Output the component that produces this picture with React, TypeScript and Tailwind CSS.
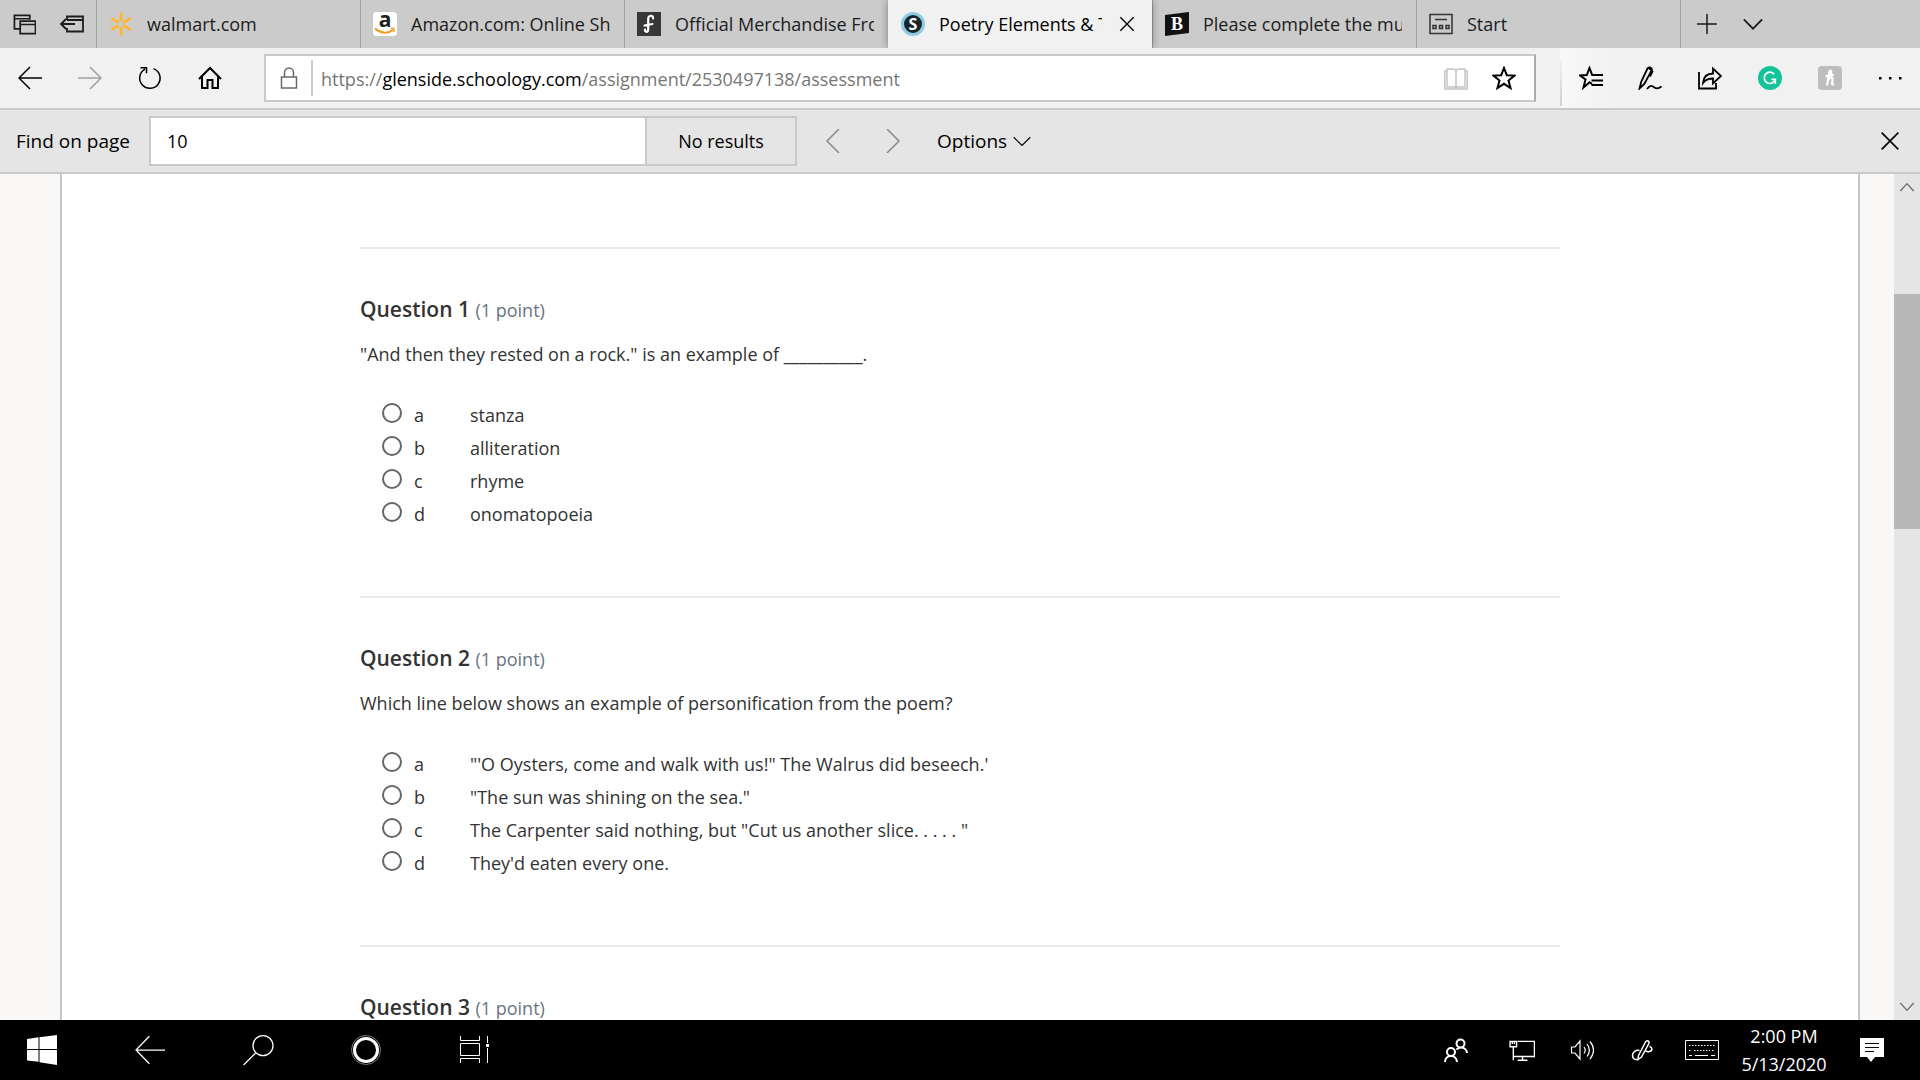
import { ReactNode } from 'react';

interface Tab {
    title: string;
    icon: ReactNode;
    active?: boolean;
}

interface Question {
    id: number;
    prompt: string;
    answers: string[];
}

const WalmartIcon = () => (
    <svg viewBox="0 0 24 24" className="size-6" stroke="#fcb830" strokeWidth="3" strokeLinecap="round">
        <path d="M12 2v6M12 16v6M3.4 7l5.2 3M15.4 14l5.2 3M3.4 17l5.2-3M15.4 10l5.2-3" />
    </svg>
);

const AmazonIcon = () => (
    <span className="relative flex size-6 justify-center rounded bg-white text-[21px] leading-[15px] font-bold text-[#221f1f]">
        a
        <svg viewBox="0 0 24 24" className="absolute inset-0" fill="none" stroke="#f49b1a" strokeWidth="2">
            <path d="M2 16.5c5.5 5 13 5.5 18 1.5" />
            <path d="M18 16.5c3-.6 4-.2 2.8 3.5" strokeWidth="1.4" />
        </svg>
    </span>
);

const MerchIcon = () => (
    <svg viewBox="0 0 24 24" className="size-6" fill="none" stroke="#fff" strokeWidth="2.2" strokeLinecap="round">
        <path d="M0 0h24v24H0z" fill="#373737" stroke="none" />
        <path d="M16 6.500c.5-4-4.800-3.500-4.800.5V17c0 4-3.700 3.500-3.200.5M7.500 13.500l8-1.500" />
    </svg>
);

const SchoologyIcon = () => (
    <span className="flex size-6 items-center justify-center rounded-full border-[3px] border-[#8ccbe0] bg-[#17242c] text-base leading-none font-bold text-white">S</span>
);

const BleacherIcon = () => (
    <span className="relative flex size-6 items-center justify-center font-['Liberation_Serif',serif] text-lg leading-none font-bold text-white">
        <svg viewBox="0 0 24 24" className="absolute inset-0" fill="#111">
            <path d="M0 3 24 0v21L0 24z" />
        </svg>
        <span className="relative">B</span>
    </span>
);

const StartIcon = () => (
    <svg viewBox="0 0 24 24" className="size-6" fill="none" stroke="#333" strokeWidth="1.5">
        <path d="M1 2.5h22v19H1zM6 7.500h12M4 13.500h3v3H4zM10.500 13.500h3v3h-3zM17 13.500h3v3h-3z" />
    </svg>
);

const tabs: Tab[] = [
    { title: 'walmart.com', icon: <WalmartIcon /> },
    { title: 'Amazon.com: Online Sho', icon: <AmazonIcon /> },
    { title: 'Official Merchandise Fro', icon: <MerchIcon /> },
    { title: 'Poetry Elements & T', icon: <SchoologyIcon />, active: true },
    { title: 'Please complete the mul', icon: <BleacherIcon /> },
    { title: 'Start', icon: <StartIcon /> },
];

const questions: Question[] = [
    {
        id: 1,
        prompt: '"And then they rested on a rock." is an example of __________.',
        answers: ['stanza', 'alliteration', 'rhyme', 'onomatopoeia'],
    },
    {
        id: 2,
        prompt: 'Which line below shows an example of personification from the poem?',
        answers: [
            '"\'O Oysters, come and walk with us!" The Walrus did beseech.\'',
            '"The sun was shining on the sea."',
            'The Carpenter said nothing, but "Cut us another slice. . . . . "',
            "They'd eaten every one.",
        ],
    },
    { id: 3, prompt: '', answers: [] },
];

interface IconProps {
    d: string;
    className?: string;
    width?: number;
}

// 24px line icon
function Icon({ d, className = 'size-6', width = 1.5 }: IconProps) {
    return (
        <svg viewBox="0 0 24 24" className={className} fill="none" stroke="currentColor" strokeWidth={width}>
            <path d={d} />
        </svg>
    );
}

function IconButton({ label, className = 'w-[60px]', children }: { label: string; className?: string; children: ReactNode }) {
    return (
        <button type="button" aria-label={label} className={`flex h-full shrink-0 items-center justify-center ${className}`}>
            {children}
        </button>
    );
}

function TabBar() {
    return (
        <div className="flex h-12 shrink-0 bg-[#cbcbcb] text-[#1c1c1c]">
            <div className="flex w-24 shrink-0">
                <IconButton label="Tabs you've set aside" className="w-12">
                    <Icon d="M7 16.500H1.500V2.500h16V7M1.500 6h16M7.500 8.500h16v13h-16zM7.500 12h16" className="size-[23px]" width={1.8} />
                </IconButton>
                <IconButton label="Set these tabs aside" className="w-12">
                    <Icon d="M7 8V4.500h16v15H7V16M7 8h16M15 12H1M6 7l-5 5 5 5" width={1.8} />
                </IconButton>
            </div>
            {tabs.map((tab) => (
                <div
                    key={tab.title}
                    className={`flex max-w-[264px] min-w-0 flex-1 items-center border-l pl-3 ${
                        tab.active ? 'z-10 border-[#f1f1f1] bg-[#f1f1f1] text-black shadow-[0_0_8px_rgba(0,0,0,0.4)] [clip-path:inset(0_-8px)]' : 'border-[#a3a3a3] pr-3.5'
                    }`}
                >
                    {tab.icon}
                    <a href="#" className="ml-3.5 min-w-0 flex-1 overflow-hidden text-[18px] leading-7 whitespace-nowrap">
                        {tab.title}
                    </a>
                    {tab.active && (
                        <IconButton label="Close tab" className="w-[50px]">
                            <Icon d="M2 2l20 20M22 2L2 22" className="size-4" width={2} />
                        </IconButton>
                    )}
                </div>
            ))}
            <div className="flex border-l border-[#a3a3a3]">
                <IconButton label="New tab" className="w-[52px]">
                    <Icon d="M12 2v20M2 12h20" />
                </IconButton>
                <IconButton label="Show tab previews" className="w-10">
                    <Icon d="M2 7l10 10L22 7" className="size-[22px]" width={2} />
                </IconButton>
            </div>
        </div>
    );
}

function NavBar() {
    return (
        <div className="flex h-[62px] shrink-0 border-b-2 border-[#c9c9c9] bg-[#f1f1f1]">
            <IconButton label="Back">
                <Icon d="M24 12H1M12 1L1 12l11 11" />
            </IconButton>
            <IconButton label="Forward">
                <Icon d="M0 12h23M12 1l11 11-11 11" className="size-6 text-[#a0a0a0]" />
            </IconButton>
            <IconButton label="Refresh">
                <Icon d="M7 3.2A10.2 10.2 0 1 0 15.5 2.600M2.500 1.800h6v5.500" />
            </IconButton>
            <IconButton label="Home">
                <Icon d="M1 13L12 2l11 11M4 10.500V22h5.500v-8h5v8H20V10.500" width={2} />
            </IconButton>
            <div className="mx-6 my-1.5 flex min-w-0 flex-1 items-center border-2 border-[#c9c9c9] border-r-[#ababab] bg-white pr-1.5">
                <div className="flex w-[45px] shrink-0 justify-center text-[#6a6a6a]">
                    <Icon d="M4.500 11h15v11h-15zM7.500 11V6.500a4.500 4.500 0 0 1 9 0V11" />
                </div>
                <div className="h-9 border-l-2 border-[#c9c9c9]" />
                <a href="#" className="ml-2 flex-1 overflow-hidden pt-0.5 text-[18px] leading-7 whitespace-nowrap text-[#767676]">
                    https://<span className="text-black">glenside.schoology.com</span>/assignment/2530497138/assessment
                </a>
                <IconButton label="Reading view" className="w-12">
                    <Icon d="M3 3h7l2 1.500L14 3h7v18h-7l-2 1-2-1H3zM12 4.500V22M3 5H.8v18h22.400V5H21" className="size-6 text-[#c4c4c4]" />
                </IconButton>
                <IconButton label="Add to favorites" className="w-12">
                    <Icon d="M12 2l2.800 7.200 7.700.4-6 4.900 2 7.500-6.500-4.200L5.500 22l2-7.500-6-4.900 7.700-.4z" width={2} />
                </IconButton>
            </div>
            <div className="flex shrink-0">
                <div className="flex bg-linear-to-r from-[#f8f8f8] to-[#f1f1f1]">
                    <div className="mt-3 mb-0.5 w-0.5 bg-linear-to-b from-[#f1f1f1] to-[#cfcfcf]" />
                    <IconButton label="Favorites hub" className="w-[58px]">
                        <Icon d="M13 18l-2.500-1.800L4.500 21.500l2-8L1 9.500l6.800-.4L10.500 2l2.700 7.100H24M12.500 14.500H24M12.500 19H24" width={2} />
                    </IconButton>
                </div>
                <IconButton label="Add notes">
                    <Icon d="M1.500 22.500l1.800-7L9.500 2.500c1.200-2.200 5-.7 4.200 1.800L6.300 18zM11 2l3.500 3.500-2.500 5M9 23c3.500-5 5.500-3 7.500-1.500s4 1.500 7-1" width={1.8} />
                </IconButton>
                <IconButton label="Share">
                    <Icon d="M1 6v16.500h17V17M5 17c.5-6.500 4-9.500 10-9.500V2.500l8 7.500-8 7.500v-5c-4.500 0-7.500 1-10 4.500z" width={1.8} />
                </IconButton>
                <IconButton label="Grammarly">
                    <span className="flex size-6 items-center justify-center rounded-full bg-[#15c39a] text-white">
                        <Icon d="M18.500 6.500A8.500 8.500 0 1 0 20 14h-6M20 14v7" className="size-4" width={2.5} />
                    </span>
                </IconButton>
                <IconButton label="Honey">
                    <span className="flex size-6 items-center justify-center rounded bg-[#bdbdbd] text-white">
                        <Icon d="M8 22L11 4c.5-3 3.500-2 2.500.5L9.500 15c3-5 6.500-5 6-1l-.8 5c-.2 2 1.300 2 2.800.5M6 9.500l11-2" className="size-[18px]" width={2.8} />
                    </span>
                </IconButton>
                <IconButton label="More">
                    <svg viewBox="0 0 24 24" className="size-6">
                        <path d="M1 11h2.500v2.500H1zM11 11h2.500v2.500H11zM21 11h2.500v2.500H21z" />
                    </svg>
                </IconButton>
            </div>
        </div>
    );
}

function FindBar() {
    return (
        <div className="flex h-16 shrink-0 items-center border-b-2 border-[#c9c9c9] bg-[#e5e5e5] text-[19px] leading-7">
            <label htmlFor="find" className="mr-4 w-[133px] shrink-0 pl-4 whitespace-nowrap">
                Find on page
            </label>
            <input id="find" type="text" defaultValue="10" className="h-[50px] w-[498px] border-2 border-[#c9c9c9] bg-white px-4 text-[18px] outline-none" />
            <output htmlFor="find" className="flex h-[50px] w-[150px] items-center justify-center border-2 border-l-0 border-[#c9c9c9] text-[18px]">
                No results
            </output>
            <IconButton label="Previous result" className="ml-1.5 w-[60px] text-[#8a8a8a]">
                <Icon d="M18 0L6 12l12 12" />
            </IconButton>
            <IconButton label="Next result" className="w-[60px] text-[#8a8a8a]">
                <Icon d="M6 0l12 12L6 24" />
            </IconButton>
            <button type="button" className="ml-3.5 flex items-center gap-1.5">
                Options
                <Icon d="M1 7l11 11L23 7" className="size-[18px]" />
            </button>
            <IconButton label="Close find bar" className="ml-auto w-[60px]">
                <Icon d="M2 2l20 20M22 2L2 22" className="size-5" width={2} />
            </IconButton>
        </div>
    );
}

function QuestionBlock({ question }: { question: Question }) {
    return (
        <section className="border-t-2 border-[#e9e9e9] pt-[46px] pb-[65px]">
            <h2 className="text-[21px] leading-7 font-semibold text-[#333]">
                Question {question.id} <span className="text-[18px] leading-7 font-normal text-[#677583]">(1 point)</span>
            </h2>
            <p className="mt-4 text-[18px] leading-7">{question.prompt}</p>
            <ul className="mt-[31px] pl-[22px]">
                {question.answers.map((answer, index) => {
                    const inputId = `q${question.id}-${index}`;
                    return (
                        <li key={inputId} className="flex h-[33px] items-start">
                            <input
                                id={inputId}
                                type="radio"
                                name={`q${question.id}`}
                                className="mt-1 size-5 shrink-0 appearance-none rounded-full border-2 border-[#666] bg-white checked:border-[6px]"
                            />
                            <label htmlFor={inputId} className="ml-3 flex text-[18px] leading-[33px]">
                                <span className="w-14">{'abcd'[index]}</span>
                                <span>{answer}</span>
                            </label>
                        </li>
                    );
                })}
            </ul>
        </section>
    );
}

function ScrollBar() {
    return (
        <div className="flex w-[26px] shrink-0 flex-col bg-[#e5e5e5] text-[#6b6b6b]">
            <IconButton label="Scroll up" className="max-h-[26px] w-full">
                <Icon d="M2 18L12 7l10 11" className="size-4" width={2} />
            </IconButton>
            <div className="flex min-h-0 flex-1 flex-col">
                <div className="grow-[94]" />
                <div className="grow-[235] bg-[#b8b8b8]" />
                <div className="grow-[465]" />
            </div>
            <IconButton label="Scroll down" className="max-h-[26px] w-full">
                <Icon d="M2 6l10 11L22 6" className="size-4" width={2} />
            </IconButton>
        </div>
    );
}

function TaskBar() {
    return (
        <footer className="flex h-[60px] shrink-0 bg-black text-white">
            <IconButton label="Start" className="w-24 pr-3">
                <svg viewBox="0 0 30 30" className="size-[30px]" fill="currentColor">
                    <path d="M0 4l11.500-1.700V14H0zM12.500 2.200L30 0v14H12.500zM0 15h11.500v11.700L0 25.500zM12.500 15H30v15l-17.500-2.800z" />
                </svg>
            </IconButton>
            <IconButton label="Back" className="w-[108px]">
                <Icon d="M24 12H.8M11.500 1L.8 12l10.700 11" className="size-[30px]" width={1} />
            </IconButton>
            <IconButton label="Search" className="w-[108px]">
                <Icon d="M24 8.500a8 8 0 1 1-16 0 8 8 0 0 1 16 0zM10.300 14.200L.5 24" className="size-[30px] overflow-visible" width={1} />
            </IconButton>
            <IconButton label="Cortana" className="w-[108px]">
                <span className="size-[30px] rounded-full border border-[#777] p-px">
                    <span className="block size-full rounded-full border-[3px] border-white" />
                </span>
            </IconButton>
            <IconButton label="Task view" className="w-[108px]">
                <svg viewBox="0 0 30 30" className="size-[30px]" fill="none" stroke="currentColor">
                    <path d="M1.500 1v4.500h19V1M1.500 8.500h19v12h-19zM1.500 28v-4.500h19V28M28.500 1v7M28.500 13v15" />
                    <path d="M27 9h3v3h-3z" fill="currentColor" stroke="none" />
                </svg>
            </IconButton>
            <div className="ml-auto flex">
                <IconButton label="People" className="w-[72px]">
                    <Icon d="M20.500 5.500a4 4 0 1 1-8 0 4 4 0 0 1 8 0zM11 14a4 4 0 1 1-8 0 4 4 0 0 1 8 0zM1 24c.3-8 11.500-8 12 0M12.500 11.500C16 8 22.500 9.500 23 15" width={2} />
                </IconButton>
                <IconButton label="Network">
                    <Icon d="M8 4h15.500v14H4v-8M1 4h6v5H1zM3 4v2.500M5 4v2.500M4 9v12.500M8 21.500h9M12.500 18v3.500" className="size-[26px]" width={1.3} />
                </IconButton>
                <IconButton label="Volume">
                    <Icon d="M1.500 9h3.500l5-6v18l-5-6H1.500zM14 9c1.500 2 1.500 4.500 0 6.500M17 6c3 4 3 8.500 0 12.500M20 3.500c4.500 5.500 4.500 12 0 17.500" width={1.2} />
                </IconButton>
                <IconButton label="Pen">
                    <Icon d="M8.500 17.500L15.500 4c1.500-2.500 4.500-.8 3.200 1.800L11.500 19l-3.500 2.500zM9.500 12.500c-3.500-1-7 1.500-7 5 0 4.500 5.500 5 6.500 2.500M19.500 8.500c3 .8 3.500 4 0 5-1.500.4-3 0-4-.6" width={1.5} />
                </IconButton>
                <IconButton label="Touch keyboard">
                    <svg viewBox="0 0 34 20" className="h-5 w-[34px]" fill="none" stroke="currentColor">
                        <path d="M.5.5h33v19H.5z" />
                        <path d="M4 5.500h26" strokeDasharray="1.5 1.5" />
                        <path d="M4 10.500h3M9 10.500h16M27 10.500h3" strokeDasharray="1.5 1.5" />
                        <path d="M4 15.500h3M10 15.500h13M26 15.500h4" />
                    </svg>
                </IconButton>
                <time className="flex w-[104px] flex-col items-center justify-center text-[18px] leading-7 whitespace-nowrap">
                    <span>2:00 PM</span>
                    <span>5/13/2020</span>
                </time>
                <IconButton label="Notifications" className="mr-3 w-[72px]">
                    <svg viewBox="0 0 24 24" className="size-6">
                        <path d="M0 0h24v19h-9l-4 5-4-5H0z" fill="#fff" />
                        <path d="M5 5.500h14M5 9.500h14M5 13.500h9" stroke="#000" />
                    </svg>
                </IconButton>
            </div>
        </footer>
    );
}

export default function App() {
    return (
        <div className="flex h-screen flex-col overflow-hidden bg-[#f9f8f7] font-['Open_Sans','Noto_Sans',sans-serif] text-black">
            <TabBar />
            <NavBar />
            <FindBar />
            <div className="flex min-h-0 flex-1">
                <main className="mr-[34px] ml-[60px] flex-1 overflow-hidden border-x-2 border-[#c6c6c6] bg-white text-[#333]">
                    <div className="mx-auto max-w-[1200px] pt-[73px]">
                        {questions.map((question) => (
                            <QuestionBlock key={question.id} question={question} />
                        ))}
                    </div>
                </main>
                <ScrollBar />
            </div>
            <TaskBar />
        </div>
    );
}
